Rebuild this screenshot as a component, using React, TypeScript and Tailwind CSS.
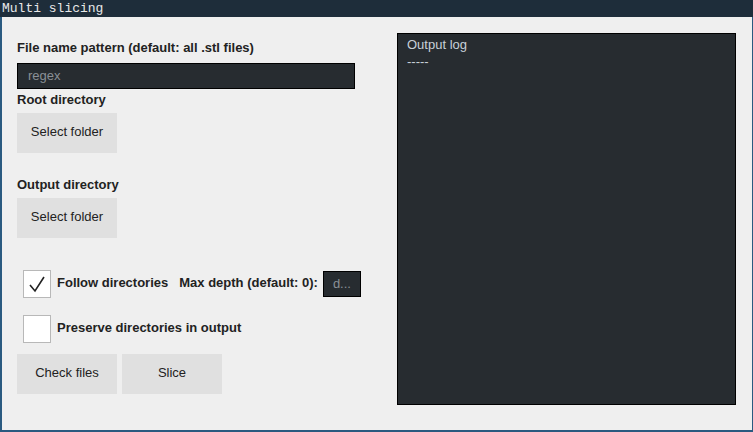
import React from "react";

export default function App() {
  return (
    <div className="w-[753px] h-[432px] flex flex-col bg-[#1e2d3a] overflow-hidden" style={{ fontFamily: '"Liberation Sans", Arial, sans-serif' }}>
      <div className="h-[17px] shrink-0 flex items-center pl-[2px] text-[13px] leading-none text-[#e8e8e8]" style={{ fontFamily: '"Liberation Mono", "Courier New", monospace' }}>
        Multi slicing
      </div>
      <div className="flex-1 flex bg-[#2a5a80] pl-[2px] pr-[1px] pb-[2px]">
        <div className="flex-1 flex bg-[#efefef] pl-[15px] pt-[16px] pr-[16px]">
          <div className="w-[380px] flex flex-col">
            <div className="h-[30px] flex items-center text-[13px] font-bold text-[#222]">File name pattern (default: all .stl files)</div>
            <div className="w-[338px] h-[26px] bg-[#272c30] border border-black flex items-center pl-[10px] text-[13px] text-[#8a9096]">regex</div>
            <div className="h-[24px] pb-[2px] flex items-center text-[13px] font-bold text-[#222]">Root directory</div>
            <button className="w-[100px] h-[40px] bg-[#e0e0e0] text-[13px] text-[#222] pb-[2px]">Select folder</button>
            <div className="h-[25px] pb-[2px] mt-[20px] flex items-center text-[13px] font-bold text-[#222]">Output directory</div>
            <button className="w-[100px] h-[40px] bg-[#e0e0e0] text-[13px] text-[#222] pb-[2px]">Select folder</button>
            <div className="flex items-center h-[28px] mt-[32px] pl-[6px]">
              <div className="w-[28px] h-[28px] bg-white border border-[#b8b8b8] flex items-center justify-center">
                <svg width="18" height="18" viewBox="0 0 18 18">
                  <path d="M2 10 L7 16 L16 2" fill="none" stroke="#222" strokeWidth="1.6" />
                </svg>
              </div>
              <span className="ml-[6px] pb-[2px] text-[13px] font-bold text-[#222]">Follow directories</span>
              <span className="ml-[11px] pb-[2px] text-[13px] font-bold text-[#222]">Max depth (default: 0):</span>
              <div className="ml-[5px] w-[38px] h-[26px] bg-[#272c30] border border-black flex items-center justify-center text-[13px] text-[#8a9096]">d...</div>
            </div>
            <div className="flex items-center h-[28px] mt-[17px] pl-[6px]">
              <div className="w-[28px] h-[28px] bg-white border border-[#b8b8b8]" />
              <span className="ml-[6px] pb-[2px] text-[13px] font-bold text-[#222]">Preserve directories in output</span>
            </div>
            <div className="flex gap-[5px] mt-[11px]">
              <button className="w-[100px] h-[40px] bg-[#e0e0e0] text-[13px] text-[#222] pb-[2px]">Check files</button>
              <button className="w-[100px] h-[40px] bg-[#e0e0e0] text-[13px] text-[#222] pb-[2px]">Slice</button>
            </div>
          </div>
          <div className="w-[339px] h-[372px] bg-[#272c30] border border-black ml-auto px-[9px] pt-[2px] text-[13px] text-[#c8d0d8] leading-[17px]">
            <div>Output log</div>
            <div>-----</div>
          </div>
        </div>
      </div>
    </div>
  );
}
